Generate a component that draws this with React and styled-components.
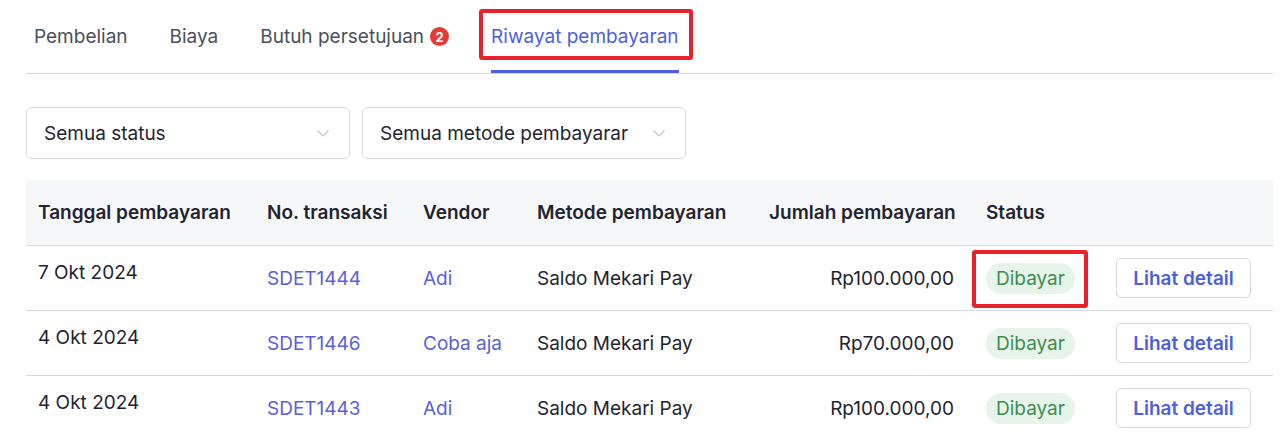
import React from "react";
import styled, { createGlobalStyle } from "styled-components";

const GlobalStyle = createGlobalStyle`
  body {
    margin: 0;
    background: #ffffff;
    font-family: Inter, "Noto Sans", sans-serif;
    color: #1f2430;
  }
`;

const Page = styled.div`
  padding: 0 9px 0 26px;
`;

const TabBar = styled.div`
  display: flex;
  gap: 42px;
  padding-left: 8px;
  border-bottom: 1px solid #d3d8e2;
`;

const Tab = styled.div`
  position: relative;
  display: flex;
  align-items: center;
  gap: 6px;
  height: 73px;
  font-size: 19px;
  color: ${(p) => (p.active ? "#4d5fdc" : "#4a4f5a")};
  box-shadow: ${(p) => (p.active ? "inset 0 -3px 0 #4d5fdc" : "none")};
`;

const Badge = styled.span`
  display: inline-flex;
  align-items: center;
  justify-content: center;
  width: 19px;
  height: 19px;
  border-radius: 50%;
  background: #e53935;
  color: #fff;
  font-size: 13px;
  font-weight: 700;
`;

const Marker = styled.div`
  position: absolute;
  top: ${(p) => p.top}px;
  bottom: ${(p) => p.bottom}px;
  left: ${(p) => p.left}px;
  right: ${(p) => p.right}px;
  border: 4px solid #e8212b;
  border-radius: 3px;
  pointer-events: none;
`;

const Filters = styled.div`
  display: flex;
  gap: 12px;
  margin-top: 33px;
`;

const Select = styled.div`
  box-sizing: border-box;
  width: 324px;
  height: 52px;
  display: flex;
  align-items: center;
  justify-content: space-between;
  padding: 0 18px 0 17px;
  border: 1px solid #d3d8e2;
  border-radius: 6px;
  font-size: 19px;
  color: #1f2430;
  white-space: nowrap;
  overflow: hidden;
`;

const Chevron = () => (
  <svg width="16" height="16" viewBox="0 0 16 16" fill="none" style={{ flexShrink: 0 }}>
    <path d="M2.5 5.5 L8 11 L13.5 5.5" stroke="#c2c7d0" strokeWidth="1.2" />
  </svg>
);

const Table = styled.table`
  margin-top: 21px;
  width: 100%;
  border-collapse: collapse;
  table-layout: fixed;
  font-size: 19px;
`;

const Head = styled.th`
  height: 65px;
  padding: 0 ${(p) => (p.right ? "20px" : "12px")} 0 12px;
  background: #f6f7f9;
  border-bottom: 1px solid #d3d8e2;
  text-align: ${(p) => (p.right ? "right" : "left")};
  font-weight: 600;
  color: #1f2430;
  white-space: nowrap;
`;

const Cell = styled.td`
  position: relative;
  height: 65px;
  padding: ${(p) => (p.top ? "15px" : "0")} ${(p) => (p.right ? "20px" : "12px")} 0 12px;
  vertical-align: ${(p) => (p.top ? "top" : "middle")};
  text-align: ${(p) => (p.right ? "right" : "left")};
  border-bottom: 1px solid #d3d8e2;
  color: ${(p) => (p.link ? "#5a5fdb" : "#1f2430")};
  white-space: nowrap;
  box-sizing: border-box;
`;

const Pill = styled.span`
  display: inline-block;
  padding: 4px 10px;
  border-radius: 16px;
  background: #e6f4e9;
  color: #3e8e50;
  line-height: 23px;
`;

const DetailButton = styled.button`
  box-sizing: border-box;
  width: 135px;
  height: 40px;
  border: 1px solid #d3d8e2;
  border-radius: 5px;
  background: #fff;
  color: #4d5fdc;
  font-family: inherit;
  font-size: 19px;
  font-weight: 600;
  cursor: pointer;
`;

const rows = [
  { date: "7 Okt 2024", no: "SDET1444", vendor: "Adi", amount: "Rp100.000,00", marked: true },
  { date: "4 Okt 2024", no: "SDET1446", vendor: "Coba aja", amount: "Rp70.000,00" },
  { date: "4 Okt 2024", no: "SDET1443", vendor: "Adi", amount: "Rp100.000,00" },
];

export default function App() {
  return (
    <Page>
      <GlobalStyle />
      <TabBar>
        <Tab>Pembelian</Tab>
        <Tab>Biaya</Tab>
        <Tab>
          Butuh persetujuan <Badge>2</Badge>
        </Tab>
        <Tab active>
          Riwayat pembayaran
          <Marker top={9} bottom={13} left={-12} right={-14} />
        </Tab>
      </TabBar>

      <Filters>
        <Select>
          Semua status <Chevron />
        </Select>
        <Select>
          Semua metode pembayarar <Chevron />
        </Select>
      </Filters>

      <Table>
        <colgroup>
          <col style={{ width: 229 }} />
          <col style={{ width: 156 }} />
          <col style={{ width: 114 }} />
          <col style={{ width: 232 }} />
          <col style={{ width: 217 }} />
          <col style={{ width: 130 }} />
          <col />
        </colgroup>
        <thead>
          <tr>
            <Head>Tanggal pembayaran</Head>
            <Head>No. transaksi</Head>
            <Head>Vendor</Head>
            <Head>Metode pembayaran</Head>
            <Head right>Jumlah pembayaran</Head>
            <Head>Status</Head>
            <Head />
          </tr>
        </thead>
        <tbody>
          {rows.map((r) => (
            <tr key={r.no}>
              <Cell top>{r.date}</Cell>
              <Cell link>{r.no}</Cell>
              <Cell link>{r.vendor}</Cell>
              <Cell>Saldo Mekari Pay</Cell>
              <Cell right>{r.amount}</Cell>
              <Cell>
                <Pill>Dibayar</Pill>
                {r.marked && <Marker top={4} bottom={2} left={-2} right={16} />}
              </Cell>
              <Cell>
                <DetailButton>Lihat detail</DetailButton>
              </Cell>
            </tr>
          ))}
        </tbody>
      </Table>
    </Page>
  );
}
